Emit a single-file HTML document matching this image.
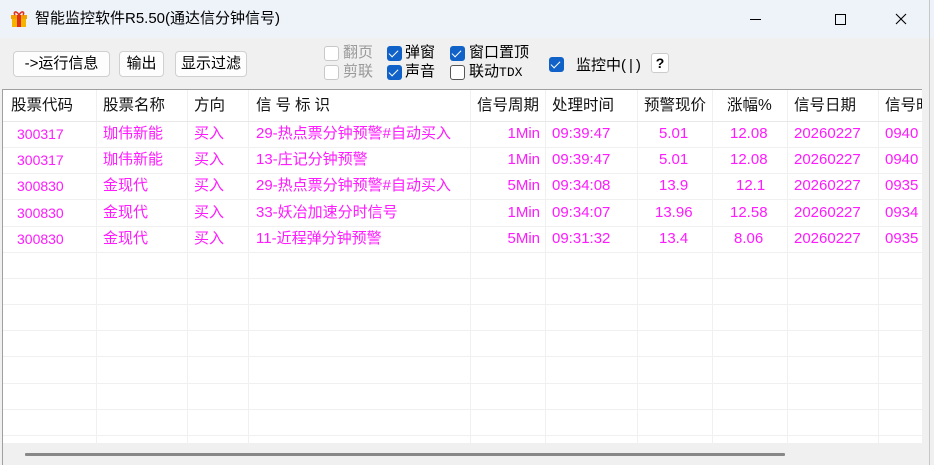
<!DOCTYPE html>
<html><head><meta charset="utf-8"><style>
*{margin:0;padding:0;box-sizing:border-box}
body{width:934px;height:465px;overflow:hidden;background:#f0f0f0;font-family:"Liberation Sans","Noto Sans CJK SC",sans-serif;position:relative;font-size:14px;color:#000}
.abs{position:absolute}
#title{left:0;top:0;width:934px;height:38px;background:#eef2f9}
.btn{position:absolute;top:51px;height:26px;background:#fdfdfd;border:1px solid #d0d0d0;border-radius:4px;font-size:15px;line-height:24px;text-align:center}
.cb{position:absolute;width:15px;height:15px;border-radius:3px}
.on{background:#1062c8}
.on::after{content:"";position:absolute;left:4px;top:2px;width:4px;height:8px;border:solid #fff;border-width:0 1.5px 1.5px 0;transform:rotate(45deg)}
.off{border:1px solid #555;background:#fff}
.dis{border:1px solid #c8c8c8;background:#fff}
.lbl{position:absolute;font-size:15px;line-height:16px}
#tbl{left:2px;top:89px;width:920px;height:354px;background:#fff;border-top:1px solid #a0a0a0;border-left:1px solid #a0a0a0;overflow:hidden}
.vl{position:absolute;top:0;width:1px;height:354px;background:#f0f0f0}
.hl{position:absolute;left:0;width:920px;height:1px;background:#f0f0f0}
.c{position:absolute;white-space:nowrap;color:#ff1aff;font-size:15px;line-height:26px}
.c b{font-weight:normal;font-size:14px}
.h{position:absolute;white-space:nowrap;font-size:15.5px;line-height:32px;color:#111}
</style></head><body>
<div id="title" class="abs"></div>
<svg class="abs" style="left:10px;top:10px" width="18" height="18" viewBox="0 0 18 18"><rect x="2" y="7" width="14" height="10" fill="#f4b400"/><rect x="1" y="5" width="16" height="4" fill="#f0a000"/><rect x="7" y="5" width="4" height="12" fill="#e03020"/><path d="M9 5C6 0 3 2 5 5M9 5c3-5 6-3 4 0" stroke="#e03020" stroke-width="1.6" fill="none"/></svg>
<div class="abs" style="left:35px;top:9px;font-size:15px;line-height:20px">智能监控软件R5.50(通达信分钟信号)</div>
<div class="abs" style="left:750px;top:19px;width:11px;height:1px;background:#000"></div>
<div class="abs" style="left:835px;top:14px;width:11px;height:11px;border:1px solid #000"></div>
<svg class="abs" style="left:895px;top:13px" width="12" height="12"><path d="M1 1L11 11M11 1L1 11" stroke="#000" stroke-width="1.1"/></svg>

<div class="btn" style="left:13px;width:97px">-&gt;运行信息</div>
<div class="btn" style="left:119px;width:45px">输出</div>
<div class="btn" style="left:175px;width:72px">显示过滤</div>

<div class="cb dis" style="left:324px;top:46px"></div><div class="lbl" style="left:343px;top:45px;color:#999">翻页</div>
<div class="cb dis" style="left:324px;top:65px"></div><div class="lbl" style="left:343px;top:64px;color:#999">剪联</div>
<div class="cb on" style="left:387px;top:46px"></div><div class="lbl" style="left:405px;top:45px">弹窗</div>
<div class="cb on" style="left:387px;top:65px"></div><div class="lbl" style="left:405px;top:64px">声音</div>
<div class="cb on" style="left:450px;top:46px"></div><div class="lbl" style="left:469px;top:45px">窗口置顶</div>
<div class="cb off" style="left:450px;top:65px"></div><div class="lbl" style="left:469px;top:64px">联动<span style="font-family:'Liberation Mono',monospace;font-size:13px">TDX</span></div>
<div class="cb on" style="left:549px;top:57px"></div><div class="lbl" style="left:576px;top:58px">监控中(&thinsp;|&thinsp;)</div>
<div class="abs" style="left:651px;top:53px;width:18px;height:20px;background:#fff;border:1px solid #ccc;border-radius:3px;font-weight:bold;font-size:14px;text-align:center;line-height:18px">?</div>

<div id="tbl" class="abs">
<div class="vl" style="left:93px"></div><div class="vl" style="left:184px"></div><div class="vl" style="left:245px"></div><div class="vl" style="left:467px"></div><div class="vl" style="left:542px"></div><div class="vl" style="left:634px"></div><div class="vl" style="left:709px"></div><div class="vl" style="left:784px"></div><div class="vl" style="left:875px"></div>
<div class="hl" style="top:31px;background:#e8e8e8"></div>
<div class="hl" style="top:57px"></div><div class="hl" style="top:83px"></div><div class="hl" style="top:109px"></div><div class="hl" style="top:136px"></div><div class="hl" style="top:162px"></div><div class="hl" style="top:188px"></div><div class="hl" style="top:214px"></div><div class="hl" style="top:240px"></div><div class="hl" style="top:266px"></div><div class="hl" style="top:293px"></div><div class="hl" style="top:319px"></div><div class="hl" style="top:345px"></div>
<div class="h" style="left:8px">股票代码</div><div class="h" style="left:100px">股票名称</div><div class="h" style="left:191px">方向</div><div class="h" style="left:253px;letter-spacing:4px">信号标识</div><div class="h" style="left:474px">信号周期</div><div class="h" style="left:549px">处理时间</div><div class="h" style="left:641px">预警现价</div><div class="h" style="left:724px">涨幅%</div><div class="h" style="left:791px">信号日期</div><div class="h" style="left:882px">信号时</div>
<div style="position:absolute;left:0;top:31px;width:920px">
<div style="position:absolute;top:0;width:920px;height:26px"><div class="c" style="left:14px"><b>300317</b></div><div class="c" style="left:100px">珈伟新能</div><div class="c" style="left:191px">买入</div><div class="c" style="left:253px">29-热点票分钟预警#自动买入</div><div class="c" style="right:383px">1Min</div><div class="c" style="left:549px">09:39:47</div><div class="c" style="left:656px">5.01</div><div class="c" style="left:727px">12.08</div><div class="c" style="left:791px">20260227</div><div class="c" style="left:882px">0940</div></div>
<div style="position:absolute;top:26.2px;width:920px;height:26px"><div class="c" style="left:14px"><b>300317</b></div><div class="c" style="left:100px">珈伟新能</div><div class="c" style="left:191px">买入</div><div class="c" style="left:253px">13-庄记分钟预警</div><div class="c" style="right:383px">1Min</div><div class="c" style="left:549px">09:39:47</div><div class="c" style="left:656px">5.01</div><div class="c" style="left:727px">12.08</div><div class="c" style="left:791px">20260227</div><div class="c" style="left:882px">0940</div></div>
<div style="position:absolute;top:52.4px;width:920px;height:26px"><div class="c" style="left:14px"><b>300830</b></div><div class="c" style="left:100px">金现代</div><div class="c" style="left:191px">买入</div><div class="c" style="left:253px">29-热点票分钟预警#自动买入</div><div class="c" style="right:383px">5Min</div><div class="c" style="left:549px">09:34:08</div><div class="c" style="left:656px">13.9</div><div class="c" style="left:733px">12.1</div><div class="c" style="left:791px">20260227</div><div class="c" style="left:882px">0935</div></div>
<div style="position:absolute;top:78.6px;width:920px;height:26px"><div class="c" style="left:14px"><b>300830</b></div><div class="c" style="left:100px">金现代</div><div class="c" style="left:191px">买入</div><div class="c" style="left:253px">33-妖冶加速分时信号</div><div class="c" style="right:383px">1Min</div><div class="c" style="left:652px">13.96</div><div class="c" style="left:549px">09:34:07</div><div class="c" style="left:727px">12.58</div><div class="c" style="left:791px">20260227</div><div class="c" style="left:882px">0934</div></div>
<div style="position:absolute;top:104.8px;width:920px;height:26px"><div class="c" style="left:14px"><b>300830</b></div><div class="c" style="left:100px">金现代</div><div class="c" style="left:191px">买入</div><div class="c" style="left:253px">11-近程弹分钟预警</div><div class="c" style="right:383px">5Min</div><div class="c" style="left:549px">09:31:32</div><div class="c" style="left:656px">13.4</div><div class="c" style="left:731px">8.06</div><div class="c" style="left:791px">20260227</div><div class="c" style="left:882px">0935</div></div>
</div>
</div>
<div class="abs" style="left:2px;top:443px;width:920px;height:22px;background:#f0f0f0;border-left:1px solid #a0a0a0"></div>
<div class="abs" style="left:25px;top:453px;width:760px;height:3px;background:#888;border-radius:1px"></div>
<div class="abs" style="left:929px;top:0;width:1px;height:465px;background:#c8c8c8"></div>
</body></html>
